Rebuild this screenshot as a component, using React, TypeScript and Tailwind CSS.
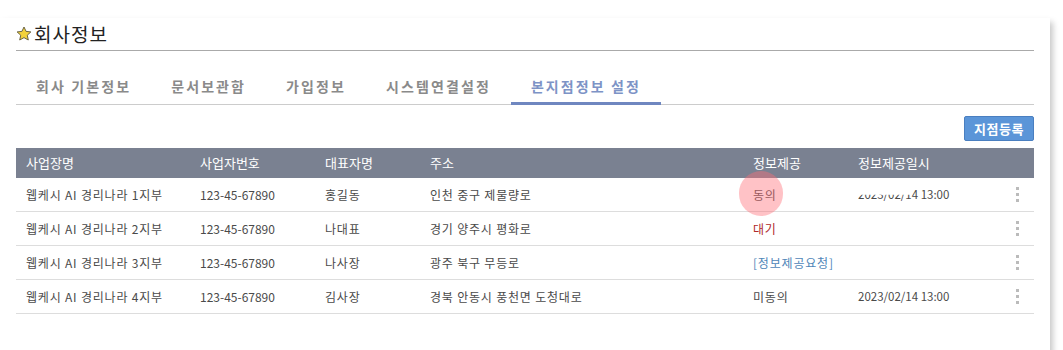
import React from "react";

const rows = [
  { name: "웹케시 AI 경리나라 1지부", biz: "123-45-67890", ceo: "홍길동", addr: "인천 중구 제물량로", info: "동의", infoCls: "text-[#4a4a4a]", date: "first" },
  { name: "웹케시 AI 경리나라 2지부", biz: "123-45-67890", ceo: "나대표", addr: "경기 양주시 평화로", info: "대기", infoCls: "text-[#b02a2a]", date: "" },
  { name: "웹케시 AI 경리나라 3지부", biz: "123-45-67890", ceo: "나사장", addr: "광주 북구 무등로", info: "[정보제공요청]", infoCls: "text-[#4f86b8]", date: "" },
  { name: "웹케시 AI 경리나라 4지부", biz: "123-45-67890", ceo: "김사장", addr: "경북 안동시 풍천면 도청대로", info: "미동의", infoCls: "text-[#4a4a4a]", date: "2023/02/14 13:00" },
];

const grid = "grid grid-cols-[174px_125px_105px_323px_105px_142px_46px] items-center";

function Star() {
  return (
    <svg width="16" height="16" viewBox="0 0 24 24" className="mr-[2px] mt-[1px]">
      <path
        d="M12 1.5l3.1 6.6 7.2.8-5.4 4.9 1.5 7.2L12 17.4 5.6 21l1.5-7.2L1.7 8.9l7.2-.8z"
        fill="#f3d23c"
        stroke="#6b6444"
        strokeWidth="1.5"
        strokeLinejoin="round"
      />
    </svg>
  );
}

function Kebab() {
  return (
    <div className="flex flex-col items-center gap-[3px]">
      <span className="block w-[3px] h-[3px] bg-[#bbbbbb]" />
      <span className="block w-[3px] h-[3px] bg-[#bbbbbb]" />
      <span className="block w-[3px] h-[3px] bg-[#bbbbbb]" />
    </div>
  );
}

export default function App() {
  const tabs = ["회사 기본정보", "문서보관함", "가입정보", "시스템연결설정", "본지점정보 설정"];
  return (
    <div className="w-[1063px] h-[350px] bg-white overflow-hidden font-['Noto_Sans_CJK_KR','Noto_Sans',sans-serif]">
      <div className="w-[1050px] h-[338px] bg-white shadow-[3px_4px_6px_rgba(0,0,0,0.22)] px-4">
        <div className="flex items-center h-[33px] mt-[18px] pb-[1px] border-b border-[#aaaaaa]">
          <Star />
          <span className="text-[19px] leading-[26px] tracking-[1px] text-[#222]">회사정보</span>
        </div>
        <div className="flex mt-[18px] border-b border-[#cccccc] h-[36px]">
          {tabs.map((t, i) => (
            <div
              key={t}
              className={
                "px-5 text-[14px] font-bold leading-[34px] tracking-[2.1px] " +
                (i === 4 ? "text-[#7d93c6] border-b-[3px] border-[#6f87c0] -mb-[1px]" : "text-[#8a8a8a]")
              }
            >
              {t}
            </div>
          ))}
        </div>
        <div className="flex justify-end mt-[11px]">
          <button className="h-[25px] w-[70px] bg-[#5b95d8] border border-[#4a7fc0] rounded-[2px] text-white text-[13px] font-bold leading-none tracking-[0.5px]">
            지점등록
          </button>
        </div>
        <div className="mt-[7px] relative">
          <div className={grid + " h-[30px] bg-[#7a8191] text-white text-[13px]"}>
            <div className="pl-[10px]">사업장명</div>
            <div className="pl-[10px]">사업자번호</div>
            <div className="pl-[10px]">대표자명</div>
            <div className="pl-[10px]">주소</div>
            <div className="pl-[10px]">정보제공</div>
            <div className="pl-[10px]">정보제공일시</div>
            <div />
          </div>
          {rows.map((r, i) => (
            <div key={i} className={grid + " h-[34px] border-b border-[#dddddd] text-[12px] text-[#4a4a4a]"}>
              <div className="pl-[10px] tracking-[0.8px]">{r.name}</div>
              <div className="pl-[10px]">{r.biz}</div>
              <div className="pl-[10px] tracking-[0.8px]">{r.ceo}</div>
              <div className="pl-[10px] tracking-[0.8px]">{r.addr}</div>
              <div className={"pl-[10px] tracking-[0.8px] " + r.infoCls}>{r.info}</div>
              <div className="pl-[10px] text-[11.5px]">
                {r.date === "first" ? (
                  <span>
                    <span className="[clip-path:inset(55%_0_0_0)]">2023/02/1</span>
                    <span>4 13:00</span>
                  </span>
                ) : (
                  r.date
                )}
              </div>
              <div className="flex justify-end pr-[17px]">
                <Kebab />
              </div>
            </div>
          ))}
          <div className="absolute left-[723px] top-[23px] w-[44px] h-[45px] rounded-full bg-[rgba(255,110,120,0.42)] pointer-events-none" />
        </div>
      </div>
    </div>
  );
}
